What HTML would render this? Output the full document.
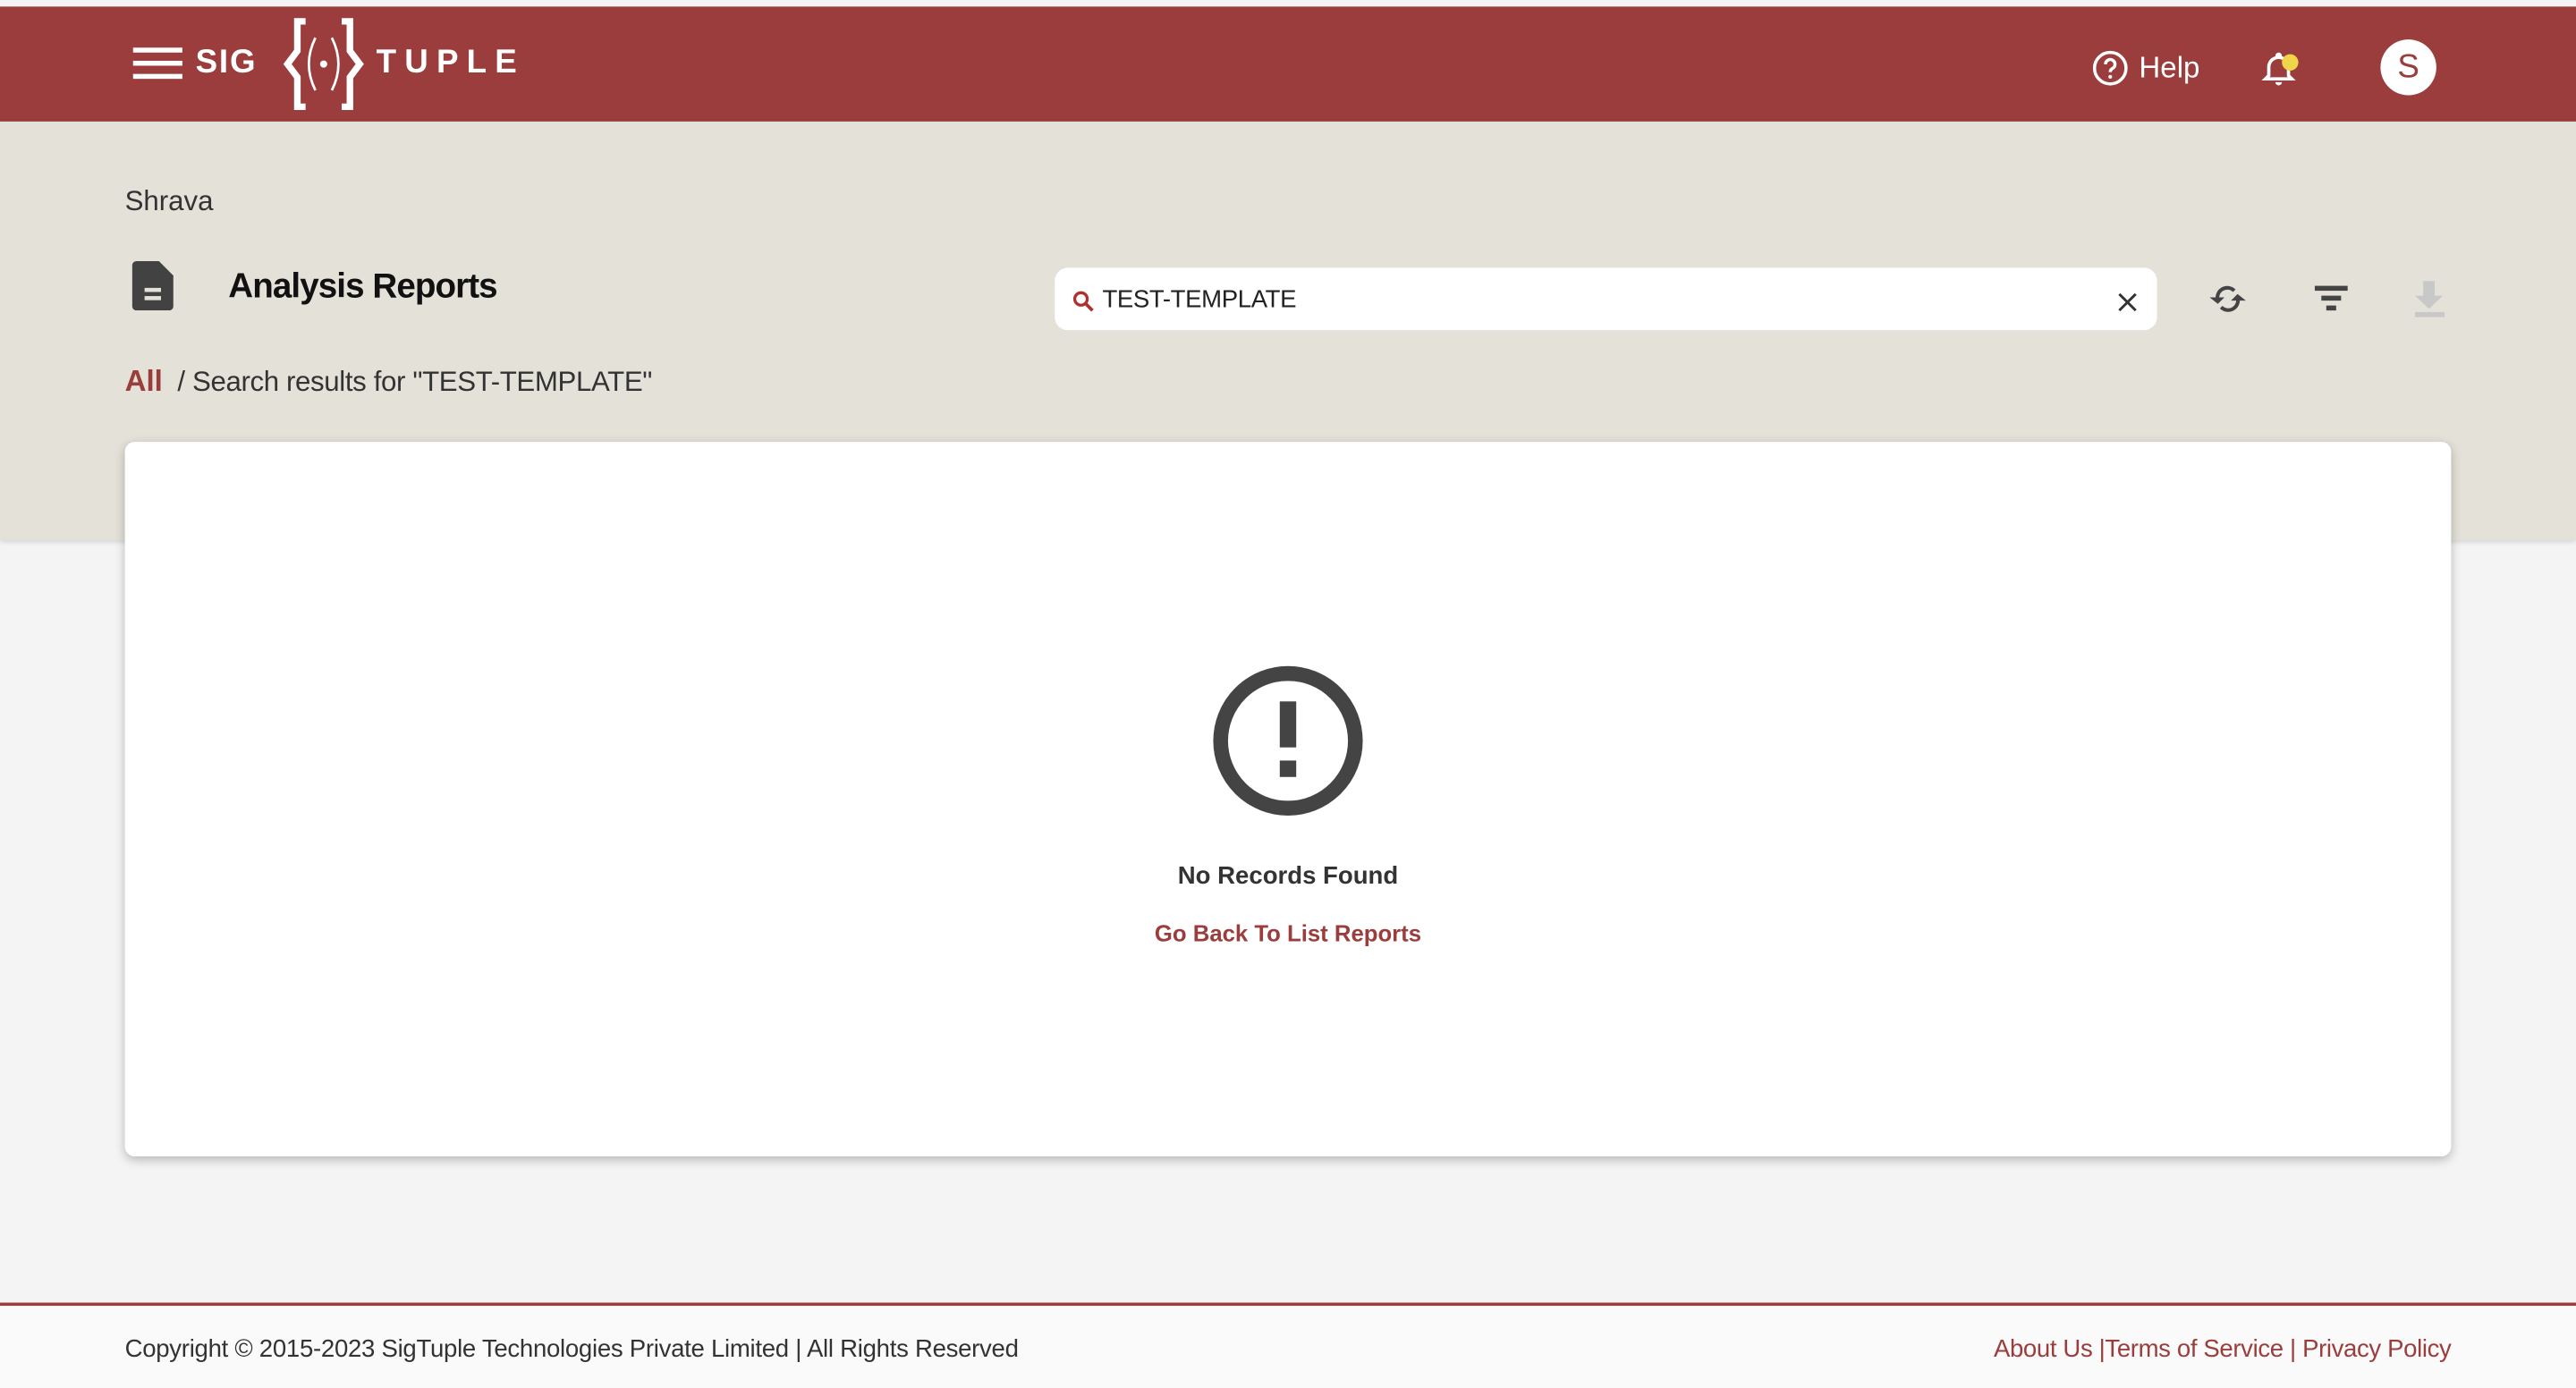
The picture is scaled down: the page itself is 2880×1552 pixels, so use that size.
<!DOCTYPE html>
<html><head><meta charset="utf-8"><style>
html,body{margin:0;padding:0;}
body{width:2880px;height:1552px;overflow:hidden;background:#f4f4f4;}
#w{width:1568px;height:845px;transform:scale(1.836735);transform-origin:0 0;position:relative;font-family:"Liberation Sans",sans-serif;background:#f4f4f4;}
.abs{position:absolute;white-space:nowrap;}
</style></head><body><div id="w">
<div class="abs" style="left:0;top:0;width:1568px;height:4px;background:#f4f4f4"></div>
<div class="abs" style="left:0;top:4px;width:1568px;height:70px;background:#9a3d3c"></div>
<div class="abs" style="left:81px;top:29px;width:30px;height:3px;background:#fff"></div>
<div class="abs" style="left:81px;top:37px;width:30px;height:3px;background:#fff"></div>
<div class="abs" style="left:81px;top:45px;width:30px;height:3px;background:#fff"></div>
<div class="abs" style="left:119px;top:27px;color:#fff;font-weight:bold;font-size:20px;letter-spacing:1px">SIG</div>
<svg class="abs" style="left:170px;top:10px" width="54" height="58" viewBox="0 0 54 58">
<path d="M16 3 h-5 v18 l-6 8 l6 8 v18 h5" fill="none" stroke="#fff" stroke-width="4"/>
<path d="M38 3 h5 v18 l6 8 l-6 8 v18 h-5" fill="none" stroke="#fff" stroke-width="4"/>
<path d="M22 13 q-8 16 0 32" fill="none" stroke="#fff" stroke-width="1.5"/>
<path d="M32 13 q8 16 0 32" fill="none" stroke="#fff" stroke-width="1.5"/>
<circle cx="27" cy="29" r="2.2" fill="#fff"/>
</svg>
<div class="abs" style="left:229px;top:27px;color:#fff;font-weight:bold;font-size:20px;letter-spacing:5px">TUPLE</div>
<svg class="abs" style="left:1273px;top:30px" width="23" height="23" viewBox="0 0 24 24"><circle cx="12" cy="12" r="10" fill="none" stroke="#fff" stroke-width="2"/><path d="M9 9.5a3 3 0 1 1 4.5 2.6c-1 .6-1.5 1.1-1.5 2.4" fill="none" stroke="#fff" stroke-width="2"/><circle cx="12" cy="17.5" r="1.2" fill="#fff"/></svg>
<div class="abs" style="left:1302px;top:31px;color:#fff;font-size:18px">Help</div>
<svg class="abs" style="left:1375px;top:30px" width="24" height="24" viewBox="0 0 24 24"><path d="M12 3a1 1 0 0 1 1 1v1a6 6 0 0 1 5 6v5l2 2H4l2-2v-5a6 6 0 0 1 5-6V4a1 1 0 0 1 1-1z" fill="none" stroke="#fff" stroke-width="2"/><path d="M10 20a2 2 0 0 0 4 0z" fill="#fff"/></svg>
<div class="abs" style="left:1389px;top:33px;width:10px;height:10px;border-radius:50%;background:#f0d44a"></div>
<div class="abs" style="left:1449px;top:24px;width:34px;height:34px;border-radius:50%;background:#fff;color:#9a3d3c;font-size:20px;text-align:center;line-height:35px">S</div>
<div class="abs" style="left:0;top:74px;width:1568px;height:255px;background:#e4e1d9;box-shadow:0 1px 3px rgba(0,0,0,.15)"></div>
<div class="abs" style="left:76px;top:113px;font-size:17px;color:#333">Shrava</div>
<svg class="abs" style="left:80px;top:159px" width="26" height="30" viewBox="0 0 20 24"><path d="M2 0h11l7 7v15a2 2 0 0 1-2 2H2a2 2 0 0 1-2-2V2a2 2 0 0 1 2-2z" fill="#424242"/><rect x="6" y="13" width="8" height="2" fill="#e4e1d9"/><rect x="6" y="17" width="8" height="2" fill="#e4e1d9"/></svg>
<div class="abs" style="left:139px;top:163px;font-size:21px;font-weight:bold;color:#111;letter-spacing:-0.5px">Analysis Reports</div>
<div class="abs" style="left:642px;top:163px;width:671px;height:38px;background:#fff;border-radius:8px"></div>
<svg class="abs" style="left:653px;top:177px" width="13" height="13" viewBox="0 0 13 13"><circle cx="5" cy="5" r="3.8" fill="none" stroke="#b03030" stroke-width="1.8"/><path d="M8 8l4 4" stroke="#b03030" stroke-width="2"/></svg>
<div class="abs" style="left:671px;top:174px;font-size:15px;color:#222;letter-spacing:-0.2px">TEST-TEMPLATE</div>
<svg class="abs" style="left:1289px;top:178px" width="12" height="12" viewBox="0 0 12 12"><path d="M1 1l10 10M11 1L1 11" stroke="#333" stroke-width="1.6"/></svg>
<svg class="abs" style="left:1344px;top:170px" width="24" height="24" viewBox="0 0 24 24"><path d="M6 13a6 6 0 0 1 10-6" fill="none" stroke="#444" stroke-width="2.2"/><path d="M18 11a6 6 0 0 1-10 6" fill="none" stroke="#444" stroke-width="2.2"/><path d="M1 11h9l-4 4z" fill="#444"/><path d="M23 13h-9l4-4z" fill="#444"/></svg>
<div class="abs" style="left:1409px;top:174px;width:20px;height:3px;background:#444"></div>
<div class="abs" style="left:1413px;top:180px;width:12px;height:3px;background:#444"></div>
<div class="abs" style="left:1416px;top:186px;width:6px;height:3px;background:#444"></div>
<svg class="abs" style="left:1469px;top:171px" width="20" height="22" viewBox="0 0 20 22"><path d="M6 0h7v9h5l-8.5 8L1 9h5z" fill="#c8c8c8"/><rect x="1" y="19" width="18" height="3" fill="#c8c8c8"/></svg>
<div class="abs" style="left:76px;top:222px;font-size:18px;color:#9a3d3c;font-weight:bold">All</div>
<div class="abs" style="left:108px;top:223px;font-size:17px;color:#333;letter-spacing:-0.2px">/ Search results for "TEST-TEMPLATE"</div>
<div class="abs" style="left:76px;top:269px;width:1416px;height:435px;background:#fff;border-radius:6px;box-shadow:0 2px 6px rgba(0,0,0,.25)"></div>
<svg class="abs" style="left:738px;top:405px" width="92" height="92" viewBox="0 0 92 92"><circle cx="46" cy="46" r="41" fill="none" stroke="#444" stroke-width="9"/><rect x="41" y="22" width="10" height="28" fill="#444"/><rect x="41" y="58" width="10" height="10" fill="#444"/></svg>
<div class="abs" style="left:0;top:525px;width:1568px;text-align:center;font-size:15px;font-weight:bold;color:#333">No Records Found</div>
<div class="abs" style="left:0;top:560px;width:1568px;text-align:center;font-size:14px;font-weight:bold;color:#9a3d3c">Go Back To List Reports</div>
<div class="abs" style="left:0;top:793px;width:1568px;height:2px;background:#9a3d3c"></div>
<div class="abs" style="left:0;top:795px;width:1568px;height:50px;background:#fafafa"></div>
<div class="abs" style="left:76px;top:813px;font-size:15px;color:#333;letter-spacing:-0.15px">Copyright © 2015-2023 SigTuple Technologies Private Limited | All Rights Reserved</div>
<div class="abs" style="right:76px;top:813px;font-size:15px;color:#9a3d3c;letter-spacing:-0.2px">About Us |Terms of Service | Privacy Policy</div>
</div></body></html>
